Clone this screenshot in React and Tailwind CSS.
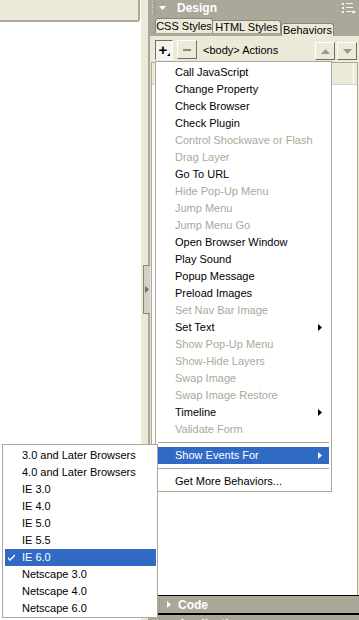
import React from "react";

const behaviors = [
  { label: "Call JavaScript", on: true },
  { label: "Change Property", on: true },
  { label: "Check Browser", on: true },
  { label: "Check Plugin", on: true },
  { label: "Control Shockwave or Flash" },
  { label: "Drag Layer" },
  { label: "Go To URL", on: true },
  { label: "Hide Pop-Up Menu" },
  { label: "Jump Menu" },
  { label: "Jump Menu Go" },
  { label: "Open Browser Window", on: true },
  { label: "Play Sound", on: true },
  { label: "Popup Message", on: true },
  { label: "Preload Images", on: true },
  { label: "Set Nav Bar Image" },
  { label: "Set Text", on: true, sub: true },
  { label: "Show Pop-Up Menu" },
  { label: "Show-Hide Layers" },
  { label: "Swap Image" },
  { label: "Swap Image Restore" },
  { label: "Timeline", on: true, sub: true },
  { label: "Validate Form" },
];

const browsers = [
  "3.0 and Later Browsers",
  "4.0 and Later Browsers",
  "IE 3.0",
  "IE 4.0",
  "IE 5.0",
  "IE 5.5",
  "IE 6.0",
  "Netscape 3.0",
  "Netscape 4.0",
  "Netscape 6.0",
];

const Arrow = ({ color = "#000" }) => (
  <svg width="4" height="7" viewBox="0 0 4 7">
    <path d="M0 0 L4 3.5 L0 7 Z" fill={color} />
  </svg>
);

const Grip = () => (
  <svg width="3" height="14" viewBox="0 0 3 14">
    {[0, 2, 4, 6, 8, 10, 12].map((y) => (
      <g key={y}>
        <rect x="0" y={y} width="1" height="1" fill="#d8d5c8" />
        <rect x="2" y={y + 1} width="1" height="1" fill="#8c8979" />
      </g>
    ))}
  </svg>
);

const Separator = () => (
  <div className="h-[9px] flex items-center">
    <div className="h-px w-full bg-[#aca899]" />
  </div>
);

const MenuRow = ({ item, active }) => (
  <div
    className={`h-[17px] leading-[17px] pl-[17px] pr-[7px] flex items-center justify-between ${
      active ? "bg-[#316ac5] text-white" : item.on ? "text-black" : "text-[#aca899]"
    }`}
  >
    <span>{item.label}</span>
    {item.sub && <Arrow color={active ? "#fff" : "#000"} />}
  </div>
);

const RaisedButton = ({ children, className = "" }) => (
  <div
    className={`flex items-center justify-center border border-t-white border-l-white border-b-[#716f64] border-r-[#716f64] bg-[#ece9d8] ${className}`}
  >
    {children}
  </div>
);

const PanelBar = ({ label }) => (
  <div className="h-[17px] shrink-0 flex items-center pl-[7px]">
    <Grip />
    <svg width="4" height="7" viewBox="0 0 4 7" className="ml-[7px]">
      <path d="M0 0 L4 3.5 L0 7 Z" fill="#fff" />
    </svg>
    <span className="ml-[7px] text-white font-bold text-[12px] leading-none">{label}</span>
  </div>
);

export default function App() {
  return (
    <div className="relative w-[359px] h-[620px] overflow-hidden flex bg-white text-[11px] font-['Liberation_Sans','DejaVu_Sans',sans-serif]">
      {/* document window */}
      <div className="w-[140px] flex flex-col">
        <div className="h-[22px] bg-[#ece9d8] border-b-2 border-r-2 border-[#aca899] rounded-br-[3px]" />
        <div className="flex-1 bg-white" />
      </div>

      {/* splitter */}
      <div className="w-[10px] flex flex-col bg-[#ece9d8] border-l border-l-white border-r-2 border-r-[#aca899]">
        <div className="mt-[265px] ml-[2px] w-[8px] h-[49px] border border-[#8c8979] bg-[#d4d0c8] flex items-center justify-center">
          <svg width="4" height="7" viewBox="0 0 4 7">
            <path d="M0 0 L4 3.5 L0 7 Z" fill="#716f64" />
          </svg>
        </div>
      </div>

      {/* panel group */}
      <div className="flex-1 flex flex-col overflow-hidden bg-[#aca899]">
        <div className="h-[15px] shrink-0 flex items-center pl-[2px] pr-[3px]">
          <Grip />
          <svg width="7" height="4" viewBox="0 0 7 4" className="ml-[4px]">
            <path d="M0 0 L7 0 L3.5 4 Z" fill="#fff" />
          </svg>
          <span className="ml-[11px] text-white font-bold text-[12px] leading-none">Design</span>
          <svg width="14" height="12" viewBox="0 0 14 12" className="ml-auto">
            <g fill="#f4f3ee">
              <rect x="0" y="1" width="2" height="2" />
              <rect x="4" y="1" width="7" height="1" />
              <rect x="0" y="5" width="2" height="2" />
              <rect x="4" y="5" width="7" height="1" />
              <rect x="0" y="9" width="2" height="2" />
              <rect x="4" y="9" width="5" height="1" />
              <path d="M9 9 L14 9 L11.5 12 Z" />
            </g>
          </svg>
        </div>

        {/* tabs */}
        <div className="h-[21px] shrink-0 flex items-end pl-[5px] whitespace-nowrap">
          <div className="w-[58px] h-[15px] mb-[3px] bg-[#ece9d8] border border-b-0 border-[#8a877a] rounded-t-[3px] flex items-center justify-center leading-none text-black">
            CSS Styles
          </div>
          <div className="w-[68px] h-[13px] mb-[3px] bg-[#ece9d8] border border-b-0 border-l-0 border-[#8a877a] rounded-tr-[3px] flex items-center justify-center leading-none text-black">
            HTML Styles
          </div>
          <div className="w-[53px] h-[13px] bg-[#ece9d8] border border-b-0 border-[#8a877a] rounded-t-[3px] flex items-center justify-center leading-none text-black">
            Behaviors
          </div>
        </div>

        {/* behaviors panel */}
        <div className="h-[559px] shrink-0 flex flex-col bg-[#ece9d8]">
          <div className="h-[26px] shrink-0 flex items-start pt-[4px] pl-[5px] pr-[2px]">
            <div className="relative w-[18px] h-[20px] border border-t-[#716f64] border-l-[#716f64] border-b-white border-r-white bg-[#f4f3ee] flex items-center justify-center">
              <span className="text-black font-bold text-[15px] leading-none -mt-[1px] -ml-[2px]">+</span>
              <svg width="3" height="3" viewBox="0 0 3 3" className="absolute right-[2px] bottom-[3px]">
                <path d="M0 3 L3 0 L3 3 Z" fill="#000" />
              </svg>
            </div>
            <RaisedButton className="ml-[4px] w-[20px] h-[19px]">
              <div className="w-[8px] h-[2px] bg-[#8c8979]" />
            </RaisedButton>
            <span className="ml-[6px] mt-[5px] text-black leading-none">&lt;body&gt; Actions</span>
            <RaisedButton className="ml-auto mt-[2px] w-[20px] h-[18px]">
              <svg width="9" height="5" viewBox="0 0 9 5">
                <path d="M0 5 L4.5 0 L9 5 Z" fill="#9d9a8b" />
              </svg>
            </RaisedButton>
            <RaisedButton className="ml-[2px] mt-[2px] w-[20px] h-[18px]">
              <svg width="9" height="5" viewBox="0 0 9 5">
                <path d="M0 0 L9 0 L4.5 5 Z" fill="#9d9a8b" />
              </svg>
            </RaisedButton>
          </div>

          <div className="flex-1 mx-px flex flex-col bg-white border border-b-0 border-[#aca899]">
            <div className="h-[22px] flex bg-[#ece9d8] border-b border-[#d4d0c8]">
              <div className="flex-1 border-r border-white" />
              <div className="w-[3px]" />
            </div>
            <div className="flex-1" />
          </div>
        </div>

        {/* collapsed panels */}
        <div className="h-px shrink-0 bg-black" />
        <PanelBar label="Code" />
        <div className="h-[2px] shrink-0 bg-black" />
        <PanelBar label="Application" />
      </div>

      {/* actions menu */}
      <div className="absolute left-[155px] top-[61px] w-[177px] h-[431px] bg-white border border-[#aca899] p-[2px]">
        {behaviors.map((item) => (
          <MenuRow key={item.label} item={item} />
        ))}
        <Separator />
        <MenuRow item={{ label: "Show Events For", on: true, sub: true }} active />
        <Separator />
        <MenuRow item={{ label: "Get More Behaviors...", on: true }} />
      </div>

      {/* show events submenu */}
      <div className="absolute left-[2px] top-[444px] w-[156px] h-[174px] bg-white border border-[#aca899] pl-[2px] pr-[1px] pt-[2px]">
        {browsers.map((b) => {
          const active = b === "IE 6.0";
          return (
            <div
              key={b}
              className={`h-[17px] leading-[17px] pl-[17px] relative ${
                active ? "bg-[#316ac5] text-white" : "text-black"
              }`}
            >
              {active && (
                <svg width="7" height="7" viewBox="0 0 7 7" className="absolute left-[3px] top-[5px]">
                  <path d="M0 3 L0 5 L2 7 L7 2 L7 0 L2 5 Z" fill="#fff" />
                </svg>
              )}
              {b}
            </div>
          );
        })}
      </div>
    </div>
  );
}
